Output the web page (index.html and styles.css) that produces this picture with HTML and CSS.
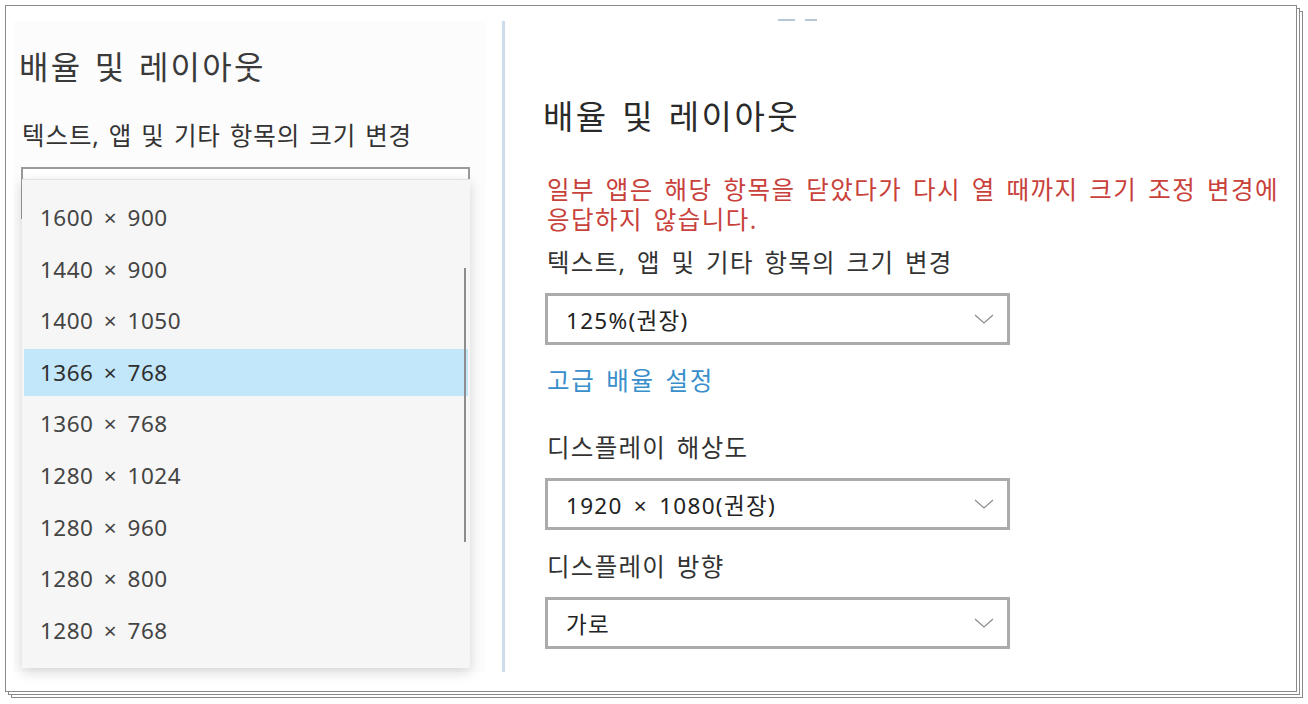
FILE: index.html
```html
<!DOCTYPE html>
<html lang="ko">
<head>
<meta charset="utf-8">
<title>배율 및 레이아웃</title>
<link rel="stylesheet" href="styles.css">
</head>
<body>
<div class="sheet">
  <section class="left">
    <h2 class="title">배율 및 레이아웃</h2>
    <p class="label">텍스트, 앱 및 기타 항목의 크기 변경</p>
    <div class="combo-wrap">
      <div class="combo"></div>
      <ul class="popup">
        <li class="item">1600 × 900</li>
        <li class="item">1440 × 900</li>
        <li class="item">1400 × 1050</li>
        <li class="item selected">1366 × 768</li>
        <li class="item">1360 × 768</li>
        <li class="item">1280 × 1024</li>
        <li class="item">1280 × 960</li>
        <li class="item">1280 × 800</li>
        <li class="item">1280 × 768</li>
        <div class="scrollbar"></div>
      </ul>
    </div>
  </section>
  <div class="divider"></div>
  <section class="right">
    <div class="dashes"><span class="dash d1"></span><span class="dash d2"></span></div>
    <h2 class="title rtitle">배율 및 레이아웃</h2>
    <p class="warning">일부 앱은 해당 항목을 닫았다가 다시 열 때까지 크기 조정 변경에<br>응답하지 않습니다.</p>
    <p class="label rlabel">텍스트, 앱 및 기타 항목의 크기 변경</p>
    <div class="select"><span>125%(권장)</span><svg class="chev" width="20" height="10" viewBox="0 0 20 10"><polyline points="1,1 10,9 19,1" fill="none" stroke="#8a8a8a" stroke-width="1.1"/></svg></div>
    <a class="link">고급 배율 설정</a>
    <p class="label rlabel l2">디스플레이 해상도</p>
    <div class="select"><span>1920 × 1080(권장)</span><svg class="chev" width="20" height="10" viewBox="0 0 20 10"><polyline points="1,1 10,9 19,1" fill="none" stroke="#8a8a8a" stroke-width="1.1"/></svg></div>
    <p class="label rlabel l3">디스플레이 방향</p>
    <div class="select"><span>가로</span><svg class="chev" width="20" height="10" viewBox="0 0 20 10"><polyline points="1,1 10,9 19,1" fill="none" stroke="#8a8a8a" stroke-width="1.1"/></svg></div>
  </section>
</div>
</body>
</html>
```
FILE: styles.css
```css
* { box-sizing: border-box; }
html, body { margin: 0; padding: 0; background: #ffffff; }
body {
  width: 1308px; height: 704px; overflow: hidden;
  font-family: "Noto Sans", "Noto Sans CJK KR", sans-serif;
  color: #333;
}
.sheet {
  margin: 5px 0 0 5px;
  width: 1292px; height: 687px;
  border: 1px solid #8a8a8a;
  background: #fff;
  box-shadow: 3px 3px 0 -1px #fff, 3px 3px 0 0 #8a8a8a, 6px 6px 0 -1px #fff, 6px 6px 0 0 #8a8a8a;
  display: flex;
  padding: 15px 0 0 8px;
}
.left {
  width: 472px; height: 651px;
  background: #fcfcfc;
  padding-left: 5px;
  flex: none;
}
.title {
  margin: 26px 0 0 0;
  font-weight: 400;
  font-size: 32px;
  line-height: 40px;
  color: #3a3a3a;
  letter-spacing: 2.2px;
  word-spacing: 2px;
}
.label {
  margin: 34px 0 0 3px;
  font-size: 24.5px;
  line-height: 30px;
  color: #333;
  letter-spacing: 0.9px;
  word-spacing: 1.8px;
}
.combo-wrap {
  position: relative;
  margin: 16px 0 0 2px;
  width: 449px;
}
.combo {
  height: 52px;
  border: 2px solid #9a9a9a;
  background: #fff;
}
.popup {
  position: absolute;
  left: 1px; top: 12px;
  width: 448px; height: 489px;
  margin: 0; padding: 14px 2px 0 2px;
  list-style: none;
  background: #f6f6f6;
  border-top: 1px solid #e2e2e2;
  box-shadow: 0 4px 12px rgba(0,0,0,0.16);
}
.item {
  height: 47px;
  margin-bottom: 4.6px;
  padding-left: 16px;
  font-size: 22.5px;
  line-height: 47px;
  color: #444;
  letter-spacing: 0.5px;
  word-spacing: 4px;
}
.item.selected { background: #c2e7fb; color: #2f2f2f; }
.scrollbar {
  position: absolute;
  left: 442px; top: 88px;
  width: 2px; height: 274px;
  background: #8d8d8d;
}
.divider {
  width: 3px; height: 651px;
  margin-left: 16px;
  background: #cddcea;
  flex: none;
}
.right {
  padding-left: 38px;
  flex: 1;
}
.dashes {
  display: flex;
  height: 2px;
  margin: -2px 0 0 235px;
}
.dash { height: 2px; background: #b6c8d8; }
.d1 { width: 17px; }
.d2 { width: 12px; margin-left: 10px; }
.rtitle {
  margin-top: 76px;
  font-size: 33px;
  color: #2a2a2a;
  letter-spacing: 2.5px;
  word-spacing: 2.5px;
}
.warning {
  margin: 38px 0 0 4px;
  font-size: 24.5px;
  line-height: 30px;
  color: #c8413b;
  letter-spacing: 1.45px;
  word-spacing: 3px;
}
.rlabel {
  margin: 13px 0 0 4px;
  color: #333;
  letter-spacing: 1.3px;
  word-spacing: 3px;
}
.select {
  display: flex;
  align-items: center;
  justify-content: space-between;
  margin: 15px 0 0 2px;
  width: 465px; height: 52px;
  border: 3px solid #ababab;
  padding: 0 13px 0 18px;
  font-size: 22.5px;
  color: #222;
  background: #fff;
  letter-spacing: 1.3px;
  word-spacing: 4px;
}
.chev { display: block; }
.link {
  display: block;
  margin: 21px 0 0 4px;
  font-size: 24.5px;
  line-height: 30px;
  color: #3a8fcb;
  letter-spacing: 1.6px;
  word-spacing: 3px;
}
.l2 { margin-top: 37px; }
.l3 { margin-top: 22px; }
```
